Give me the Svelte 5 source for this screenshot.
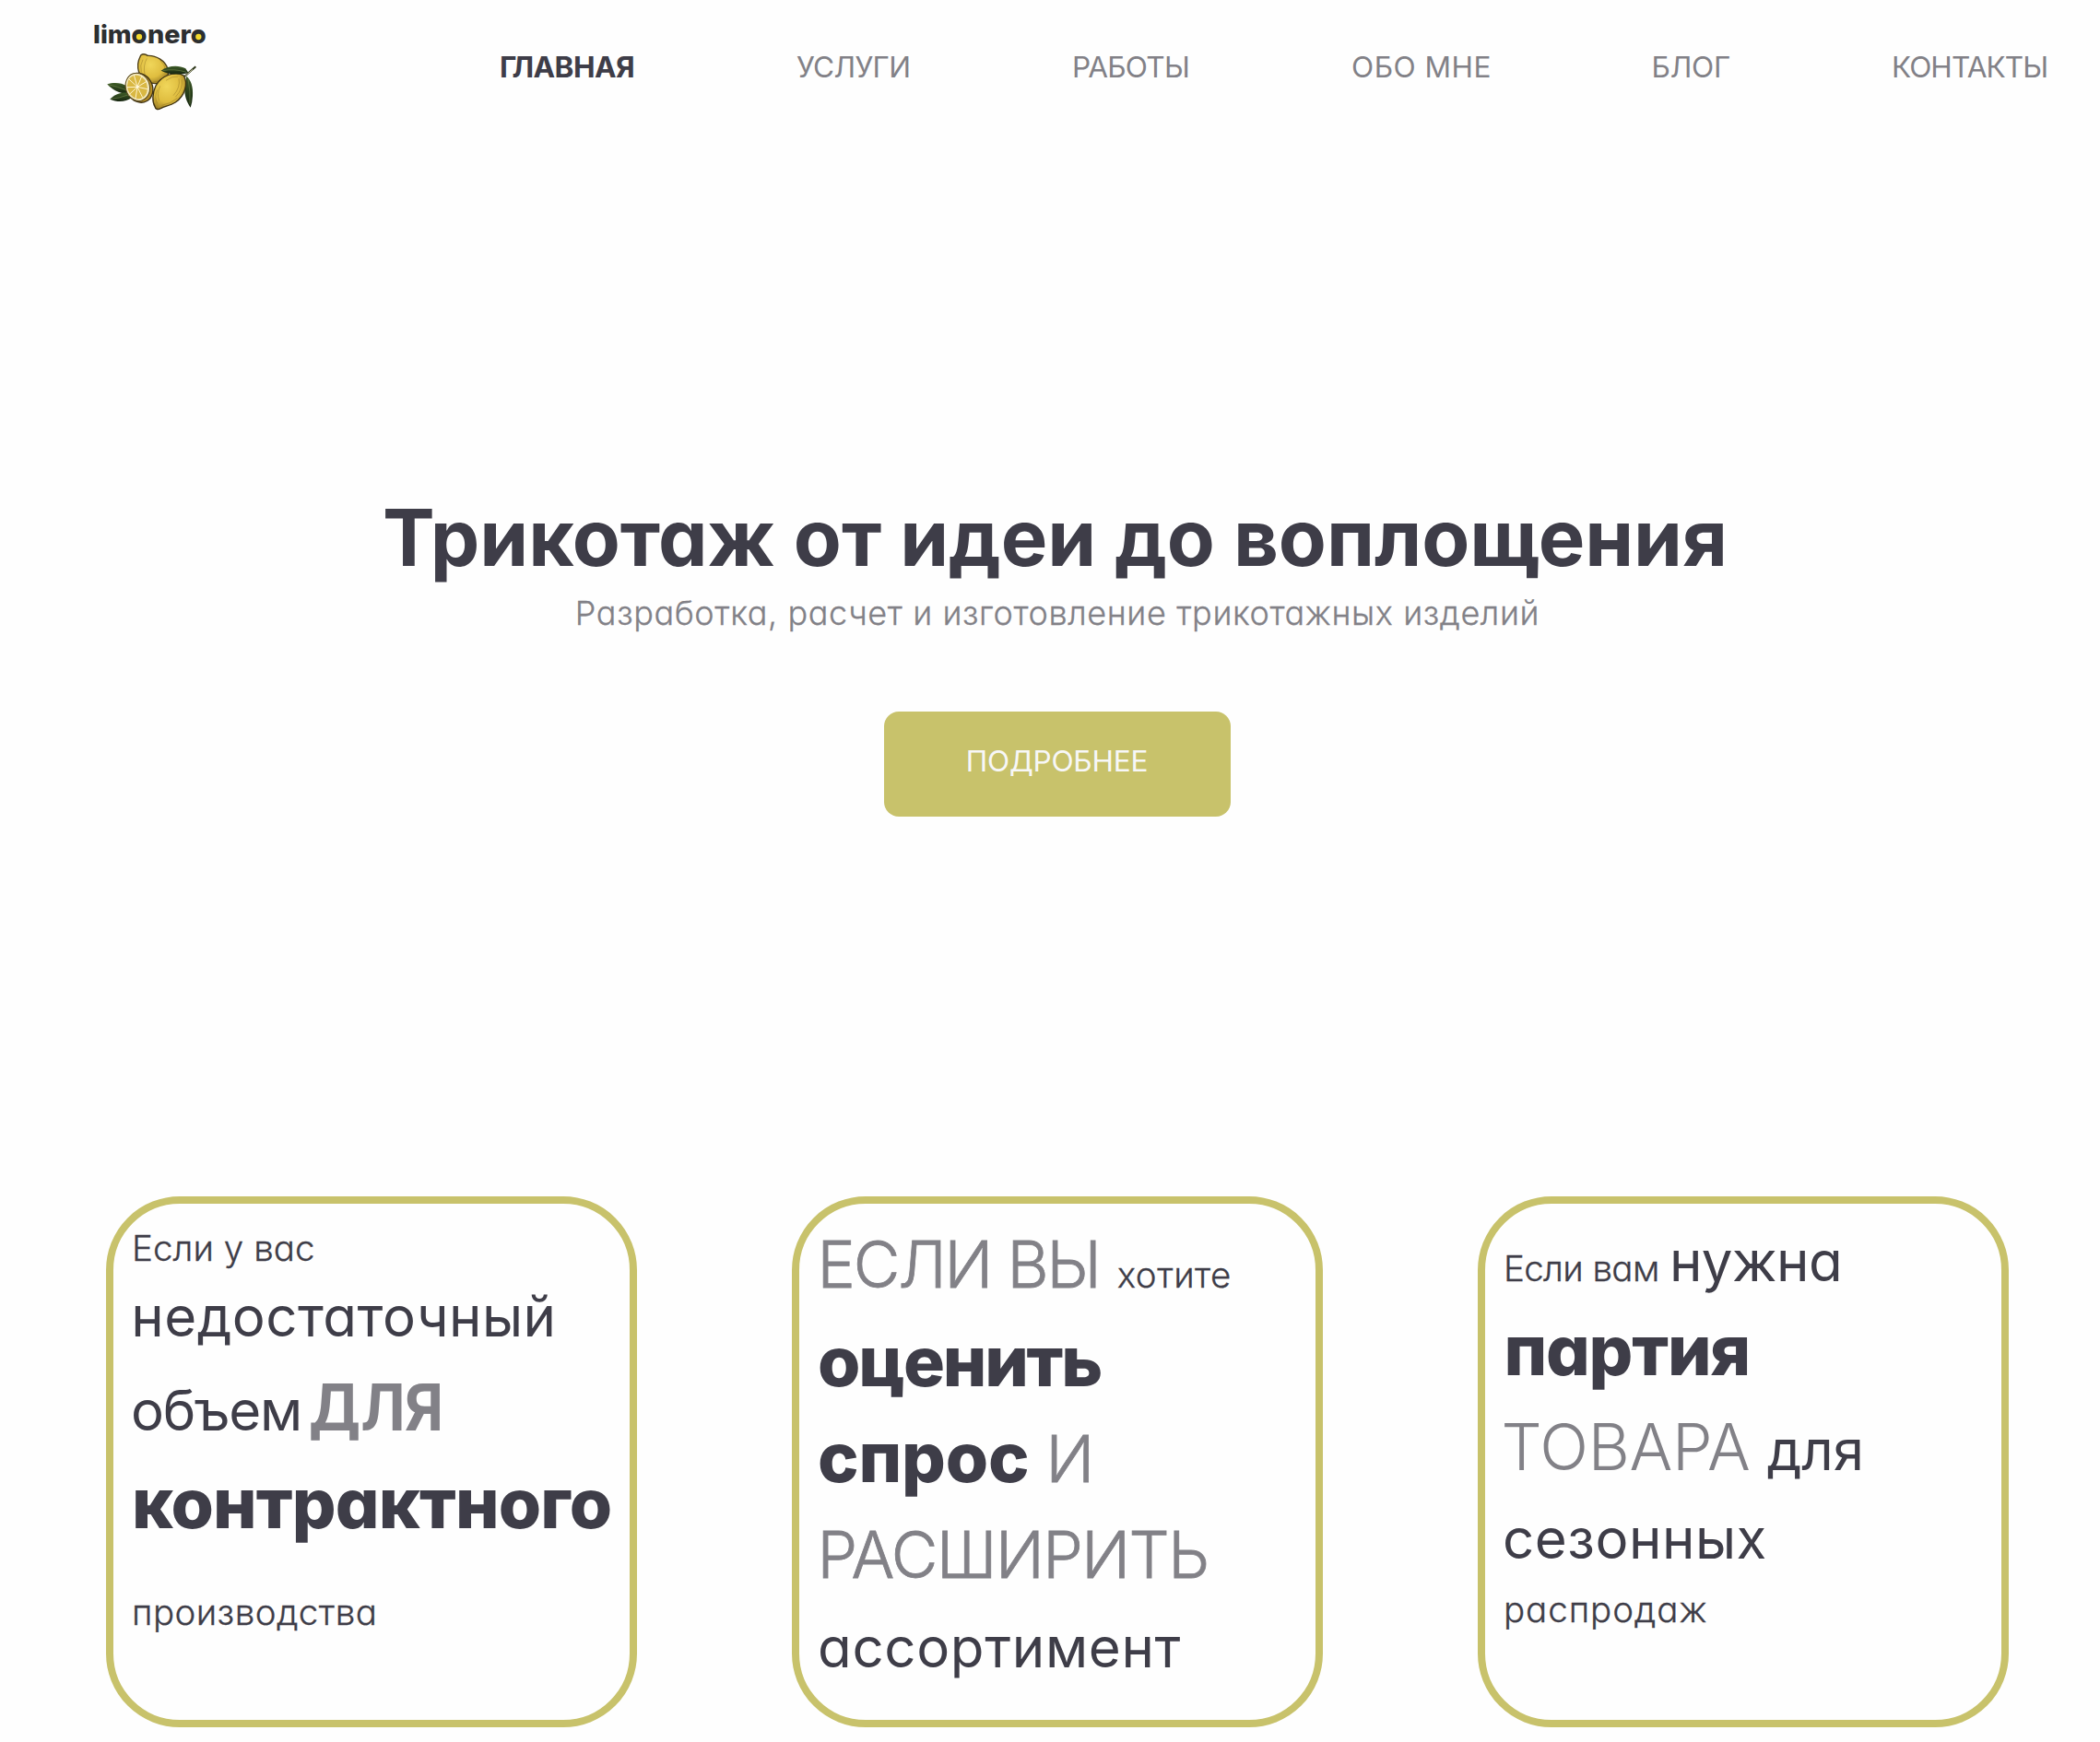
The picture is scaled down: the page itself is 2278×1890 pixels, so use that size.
<script>
  const nav = [
    { text: 'ГЛАВНАЯ', ls: -0.58, ml: 302, active: true },
    { text: 'УСЛУГИ', ls: -0.67, ml: 175.8 },
    { text: 'РАБОТЫ', ls: -0.75, ml: 175.7 },
    { text: 'ОБО МНЕ', ls: 0.46, ml: 176 },
    { text: 'БЛОГ', ls: -0.27, ml: 173.6 },
    { text: 'КОНТАКТЫ', ls: -0.95, ml: 175 }
  ];

  // kind picks the type style; ls is tracking, ml the space before, both in px
  const cards = [
    [
      { mt: 29, runs: [{ kind: 'small', text: 'Если у вас', ls: 0.05, ml: 20 }] },
      { mt: 25, runs: [{ kind: 'medium', text: 'недостаточный', ls: 0.45, ml: 19.3 }] },
      { mt: 35, runs: [{ kind: 'medium', text: 'объем', ls: -1.28, ml: 19 }, { kind: 'caps strong', text: 'ДЛЯ', ls: -1.1, ml: 7.6 }] },
      { mt: 30.5, runs: [{ kind: 'heavy', text: 'контрактного', ls: -0.87, ml: 20 }] },
      { mt: 61.5, runs: [{ kind: 'small', text: 'производства', ls: 0.42, ml: 20 }] }
    ],
    [
      { mt: 32, runs: [{ kind: 'caps', text: 'ЕСЛИ ВЫ', ls: -2.15, ml: 19.6 }, { kind: 'small', text: 'хотите', ls: 0.48, ml: 19.2 }] },
      { mt: 31.5, runs: [{ kind: 'heavy', text: 'оценить', ls: -2.23, ml: 20 }] },
      { mt: 29.5, runs: [{ kind: 'heavy', text: 'спрос', ls: -0.17, ml: 20 }, { kind: 'caps', text: 'И', ls: 0, ml: 18 }] },
      { mt: 34.3, runs: [{ kind: 'caps', text: 'РАСШИРИТЬ', ls: -1.5, ml: 19.6 }] },
      { mt: 34.2, runs: [{ kind: 'medium', text: 'ассортимент', ls: 0.65, ml: 20 }] }
    ],
    [
      { mt: 32, runs: [{ kind: 'small', text: 'Если вам', ls: -0.62, ml: 19.9 }, { kind: 'medium', text: 'нужна', ls: -0.58, ml: 11.3 }] },
      { mt: 29.2, runs: [{ kind: 'heavy', text: 'партия', ls: -1.24, ml: 20.5 }] },
      { mt: 33.5, runs: [{ kind: 'caps thin', text: 'ТОВАРА', ls: -0.35, ml: 17.5 }, { kind: 'medium', text: 'для', ls: -0.1, ml: 18.3 }] },
      { mt: 33.5, runs: [{ kind: 'medium', text: 'сезонных', ls: 0.51, ml: 19 }] },
      { mt: 28.6, runs: [{ kind: 'small', text: 'распродаж', ls: 0.92, ml: 20 }] }
    ]
  ];
</script>

<header>
  <svg class="logo" viewBox="0 0 450 360" aria-label="limonero">
    <defs>
      <radialGradient id="lemon" cx=".42" cy=".36" r=".72">
        <stop offset="0" stop-color="#f0d65a" />
        <stop offset=".6" stop-color="#dfbd3f" />
        <stop offset="1" stop-color="#8f7220" />
      </radialGradient>
      <linearGradient id="leaf" x1="0" y1="0" x2="0" y2="1">
        <stop offset="0" stop-color="#3f5d28" />
        <stop offset="1" stop-color="#15240f" />
      </linearGradient>
    </defs>
    <text x="33" y="112" textLength="125" lengthAdjust="spacingAndGlyphs">lim</text>
    <text x="183" y="112" text-anchor="middle">o</text>
    <text x="210" y="112" textLength="143" lengthAdjust="spacingAndGlyphs">ner</text>
    <text x="376" y="112" text-anchor="middle">o</text>
    <circle class="ring" cx="183" cy="90" r="14.5" />
    <circle class="ring" cx="376" cy="90" r="14.5" />

    <path fill="url(#leaf)" d="M79 244C100 237 126 239 143 250L145 276C115 274 95 262 79 244Z" />
    <path fill="url(#leaf)" d="M88 293C104 276 126 269 146 272L158 288C140 302 113 304 88 293Z" />
    <path class="vein" d="M82 245Q112 252 144 264M91 292Q118 290 146 279" />
    <path fill="url(#lemon)" stroke="#4a3c16" stroke-width="4" d="M188 150C194 145 204 146 211 151C239 150 268 168 276 194C283 220 264 243 235 242C201 240 176 214 179 178C180 166 184 158 188 150Z" />
    <path class="hatch" d="M195 164Q184 182 190 205M208 160Q194 184 202 216M251 166Q268 182 269 202M229 235Q252 238 263 222" />
    <path fill="url(#leaf)" d="M337 218C352 230 359 253 357 282Q356 303 350 320C337 302 329 279 331 252Z" />
    <path class="vein" d="M342 226Q350 268 348 308" />

    <ellipse cx="184" cy="256" rx="42" ry="49" transform="rotate(-28 184 256)" fill="#b68e25" stroke="#3b3014" stroke-width="4" />
    <ellipse cx="178" cy="253" rx="39" ry="46" transform="rotate(-18 178 253)" fill="#f2e8bd" stroke="#5c4b1c" stroke-width="3" />
    <ellipse cx="177" cy="253" rx="32" ry="39" transform="rotate(-18 177 253)" fill="#d9b843" />
    <path class="pith" d="M177 253L166 214M177 253L192 216M177 253L209 234M177 253L210 260M177 253L194 287M177 253L171 291M177 253L149 279M177 253L144 254M177 253L149 227" />
    <circle cx="177" cy="253" r="4" fill="#fff8df" />

    <path fill="url(#lemon)" stroke="#3d3112" stroke-width="4" d="M328 216C343 241 332 282 301 303C285 313 265 317 255 322C246 329 235 326 234 317C225 302 225 274 237 249C255 217 299 198 328 216Z" />
    <path class="hatch" d="M321 229Q327 258 301 286M312 226Q318 254 294 281M242 262Q231 286 242 307M251 250Q239 275 248 298M256 313Q284 309 307 289M270 232Q290 217 310 219" />
    <path fill="url(#leaf)" d="M254 200C276 183 311 180 334 193L343 207C315 215 280 213 254 200Z" />
    <path class="vein" d="M260 200Q295 192 337 205" />
    <path d="M331 219Q344 207 353 199L367 187" stroke="#2c3518" stroke-width="6" fill="none" />
    <path d="M333 217L357 196" stroke="#e4e0bd" stroke-width="2.5" fill="none" />
  </svg>
  <nav>
    {#each nav as item}
      <a class:active={item.active} style:letter-spacing="{item.ls}px" style:margin-left="{item.ml}px">{item.text}</a>
    {/each}
  </nav>
</header>

<main>
  <section class="hero">
    <h1>Трикотаж от идеи до воплощения</h1>
    <p>Разработка, расчет и изготовление трикотажных изделий</p>
    <button>ПОДРОБНЕЕ</button>
  </section>

  <section class="cards">
    {#each cards as lines}
      <article>
        {#each lines as line}
          <div class="line" style:margin-top="{line.mt}px">
            {#each line.runs as run}
              <span class={run.kind} style:letter-spacing="{run.ls}px" style:margin-left="{run.ml}px">{run.text}</span>
            {/each}
          </div>
        {/each}
      </article>
    {/each}
  </section>
</main>

<style>
  :global(body) {
    background: #fefefe;
    color: #3e3d48;
    font-family: Inter, "Open Sans", sans-serif;
    font-feature-settings: 'cv11' 1;
    line-height: 1;
    overflow: hidden;
  }
  header {
    display: flex;
    align-items: flex-start;
    height: 120px;
    padding: 10px 0 0 90px;
  }
  .logo {
    width: 150px;
    height: 120px;
    flex: none;
  }
  .logo text {
    font: 800 82px Inter, sans-serif;
    fill: #2d2f31;
  }
  .ring {
    fill: #f4d92c;
    stroke: #2d2f31;
    stroke-width: 10;
  }
  .vein {
    fill: none;
    stroke: #6d8347;
    stroke-width: 2;
  }
  .hatch {
    fill: none;
    stroke: #7d611c;
    stroke-opacity: .55;
    stroke-width: 2;
  }
  .pith {
    stroke: #fff4cc;
    stroke-width: 3;
  }
  nav {
    display: flex;
    padding-top: 46.7px;
    white-space: pre;
    font-size: 31.6px;
    color: #828187;
  }
  .active {
    color: #3e3d48;
    font-weight: 700;
  }
  main {
    padding: 0 99px 0 115px;
  }
  .hero {
    display: flex;
    flex-direction: column;
    align-items: center;
    height: 757.4px;
    padding-top: 410.6px;
    white-space: nowrap;
  }
  h1 {
    margin: 0 5px 0 0;
    font-size: 85px;
    font-weight: 700;
    letter-spacing: -.09px;
  }
  p {
    margin: 21.4px 0 89.1px;
    font-size: 36px;
    font-weight: 300;
    letter-spacing: .6px;
    color: #828187;
    -webkit-text-stroke: .3px #828187;
  }
  button {
    width: 376px;
    height: 114px;
    padding: 0 1px 7px 0;
    border: 0;
    border-radius: 16px;
    background: #c8c26b;
    color: #f7f7f7;
    font: inherit;
    font-size: 31.6px;
    letter-spacing: -.26px;
  }
  .cards {
    display: grid;
    grid-template-columns: repeat(3, 576px);
    justify-content: space-between;
  }
  article {
    box-sizing: border-box;
    display: flow-root;
    height: 576px;
    border: 8px solid #c8c26b;
    border-radius: 80px;
  }
  .line {
    display: flex;
    align-items: baseline;
    white-space: pre;
  }
  .small {
    font-size: 38.5px;
    font-weight: 300;
    -webkit-text-stroke: .3px #3e3d48;
  }
  .medium {
    font-size: 60px;
    font-weight: 400;
  }
  .heavy {
    font-size: 75px;
    font-weight: 800;
  }
  .caps {
    font-size: 69.5px;
    font-weight: 300;
    color: #828187;
    -webkit-text-stroke: .8px #828187;
  }
  .thin {
    -webkit-text-stroke: 0;
  }
  .strong {
    font-weight: 700;
    -webkit-text-stroke: 0;
    transform: scaleX(.93);
    transform-origin: left;
  }
</style>
